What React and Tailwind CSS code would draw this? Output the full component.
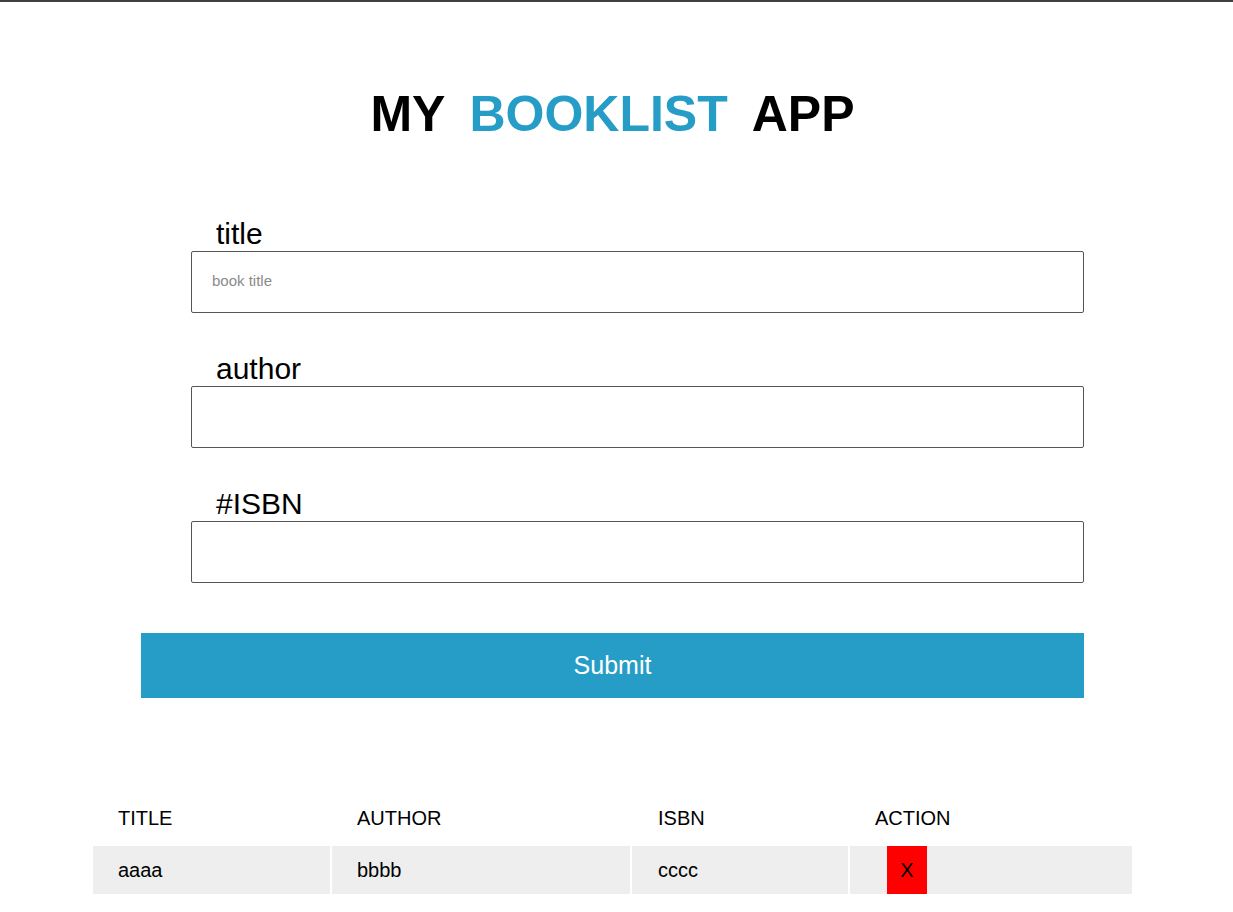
import { useState } from "react";

const books = [{ title: "aaaa", author: "bbbb", isbn: "cccc" }];

const Field = ({ label, placeholder, value, onChange, last }) => (
  <div className={last ? "" : "mb-[38px]"}>
    <label className="block pl-[25px] text-[30px] leading-[35px] text-black">
      {label}
    </label>
    <input
      value={value}
      onChange={(e) => onChange(e.target.value)}
      placeholder={placeholder}
      className="block w-full h-[62px] border border-[#555] rounded-[2px] pl-[20px] pb-[3px] text-[15px] text-black placeholder:text-[#8a8a8a] outline-none"
    />
  </div>
);

export default function App() {
  const [title, setTitle] = useState("");
  const [author, setAuthor] = useState("");
  const [isbn, setIsbn] = useState("");
  const [list, setList] = useState(books);

  const cols = "grid grid-cols-[237px_298px_216px_282px] gap-x-[2px]";

  return (
    <div className="min-h-screen bg-white border-t-2 border-[#404040] font-['Liberation_Sans',Arial,sans-serif]">
      <div className="w-[1225px] pb-[18px]">
        {/* Heading */}
        <h1 className="mt-[87px] flex justify-center gap-[24px] text-[50px] leading-none font-bold">
          <span className="text-black">MY</span>
          <span className="text-[#269dc7]">BOOKLIST</span>
          <span className="text-black">APP</span>
        </h1>

        {/* Form */}
        <div className="mx-auto w-[943px] mt-[77px]">
          <div className="ml-[50px]">
            <Field label="title" placeholder="book title" value={title} onChange={setTitle} />
            <Field label="author" value={author} onChange={setAuthor} />
            <Field label="#ISBN" value={isbn} onChange={setIsbn} last />
          </div>
          <button
            type="button"
            onClick={() => {
              if (!title && !author && !isbn) return;
              setList([...list, { title, author, isbn }]);
              setTitle("");
              setAuthor("");
              setIsbn("");
            }}
            className="mt-[50px] w-full h-[65px] bg-[#269dc7] text-white text-[25px]"
          >
            Submit
          </button>
        </div>

        {/* Table */}
        <div className="mx-auto w-[1039px] mt-[96px] text-[20px] text-black">
          <div className={`${cols} h-[48px] items-center`}>
            <div className="pl-[25px]">TITLE</div>
            <div className="pl-[25px]">AUTHOR</div>
            <div className="pl-[26px]">ISBN</div>
            <div className="pl-[25px]">ACTION</div>
          </div>
          {list.map((b, i) => (
            <div key={i} className={`${cols} h-[48px] mt-[4px]`}>
              <div className="bg-[#eeeeee] pl-[25px] flex items-center">{b.title}</div>
              <div className="bg-[#eeeeee] pl-[25px] flex items-center">{b.author}</div>
              <div className="bg-[#eeeeee] pl-[26px] flex items-center">{b.isbn}</div>
              <div className="bg-[#eeeeee] pl-[37px] flex">
                <button
                  type="button"
                  onClick={() => setList(list.filter((_, j) => j !== i))}
                  className="w-[40px] h-full bg-[#ff0000] text-black text-[20px]"
                >
                  X
                </button>
              </div>
            </div>
          ))}
        </div>
      </div>
    </div>
  );
}
